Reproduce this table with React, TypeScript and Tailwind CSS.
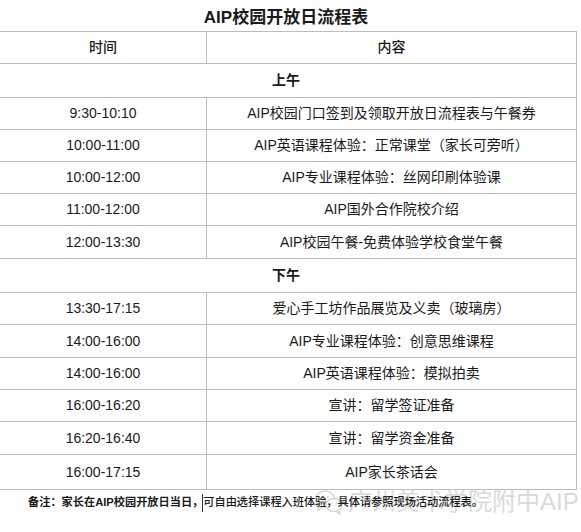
import React from "react";

type Row = { kind: "head" | "section" | "row"; t?: string; c: string; h: number };

const rows: Row[] = [
  { kind: "head", t: "时间", c: "内容", h: 32 },
  { kind: "section", c: "上午", h: 34 },
  { kind: "row", t: "9:30-10:10", c: "AIP校园门口签到及领取开放日流程表与午餐券", h: 32 },
  { kind: "row", t: "10:00-11:00", c: "AIP英语课程体验：正常课堂（家长可旁听）", h: 32 },
  { kind: "row", t: "10:00-12:00", c: "AIP专业课程体验：丝网印刷体验课", h: 32 },
  { kind: "row", t: "11:00-12:00", c: "AIP国外合作院校介绍", h: 32 },
  { kind: "row", t: "12:00-13:30", c: "AIP校园午餐-免费体验学校食堂午餐", h: 33 },
  { kind: "section", c: "下午", h: 34 },
  { kind: "row", t: "13:30-17:15", c: "爱心手工坊作品展览及义卖（玻璃房）", h: 32 },
  { kind: "row", t: "14:00-16:00", c: "AIP专业课程体验：创意思维课程", h: 33 },
  { kind: "row", t: "14:00-16:00", c: "AIP英语课程体验：模拟拍卖", h: 32 },
  { kind: "row", t: "16:00-16:20", c: "宣讲：留学签证准备", h: 32 },
  { kind: "row", t: "16:20-16:40", c: "宣讲：留学资金准备", h: 33 },
  { kind: "row", t: "16:00-17:15", c: "AIP家长茶话会", h: 35 },
];

function WeChatIcon() {
  return (
    <svg width="30" height="26" viewBox="0 0 30 26" fill="none" stroke="#d6d6d6" strokeWidth="1.4">
      <ellipse cx="11" cy="10" rx="9.5" ry="8" />
      <path d="M5 17 L4 21 L8.5 18.5" />
      <circle cx="8" cy="8" r="1.1" fill="#d6d6d6" stroke="none" />
      <circle cx="14" cy="8" r="1.1" fill="#d6d6d6" stroke="none" />
      <ellipse cx="20" cy="16" rx="8" ry="6.5" fill="white" />
      <path d="M25 21.5 L26 25 L22 22.5" />
      <circle cx="17.5" cy="14.5" r="0.9" fill="#d6d6d6" stroke="none" />
      <circle cx="22.5" cy="14.5" r="0.9" fill="#d6d6d6" stroke="none" />
    </svg>
  );
}

export default function App() {
  return (
    <div
      className="relative w-[581px] h-[532px] bg-white overflow-hidden text-[#1a1a1a]"
      style={{ fontFamily: '"Liberation Sans", "Noto Sans CJK SC", sans-serif' }}
    >
      <div className="h-[31px] flex items-center justify-center pr-[9px] pt-[4px] text-[17px] font-bold leading-none">
        AIP校园开放日流程表
      </div>
      <div className="w-[577px] border-t border-r border-[#bdbdbd]">
        {rows.map((r, i) => (
          <div
            key={i}
            className={`flex border-b border-[#bdbdbd] text-[14px] ${r.kind === "head" ? "font-medium" : ""}`}
            style={{ height: r.h }}
          >
            {r.kind === "section" ? (
              <div className="flex-1 flex items-center justify-center pr-[4px] font-bold">{r.c}</div>
            ) : (
              <>
                <div className="w-[207px] shrink-0 border-r border-[#bdbdbd] flex items-center justify-center">
                  {r.t}
                </div>
                <div className="flex-1 flex items-center justify-center">{r.c}</div>
              </>
            )}
          </div>
        ))}
      </div>
      <div className="absolute left-[314px] top-[489px] flex items-center gap-[4px] text-[24px] text-[#dadada] leading-none whitespace-nowrap">
        <WeChatIcon />
        <span>广州美术学院附中AIP</span>
      </div>
      <div className="relative flex items-center h-[26px] pl-[28px] text-[11.2px] leading-none">
        <span className="font-bold">备注：家长在AIP校园开放日当日，</span>
        <span className="inline-block w-px h-[18px] bg-[#333] -ml-[1px]" />
        <span className="font-medium">可自由选择课程入班体验，具体请参照现场活动流程表。</span>
      </div>
    </div>
  );
}
